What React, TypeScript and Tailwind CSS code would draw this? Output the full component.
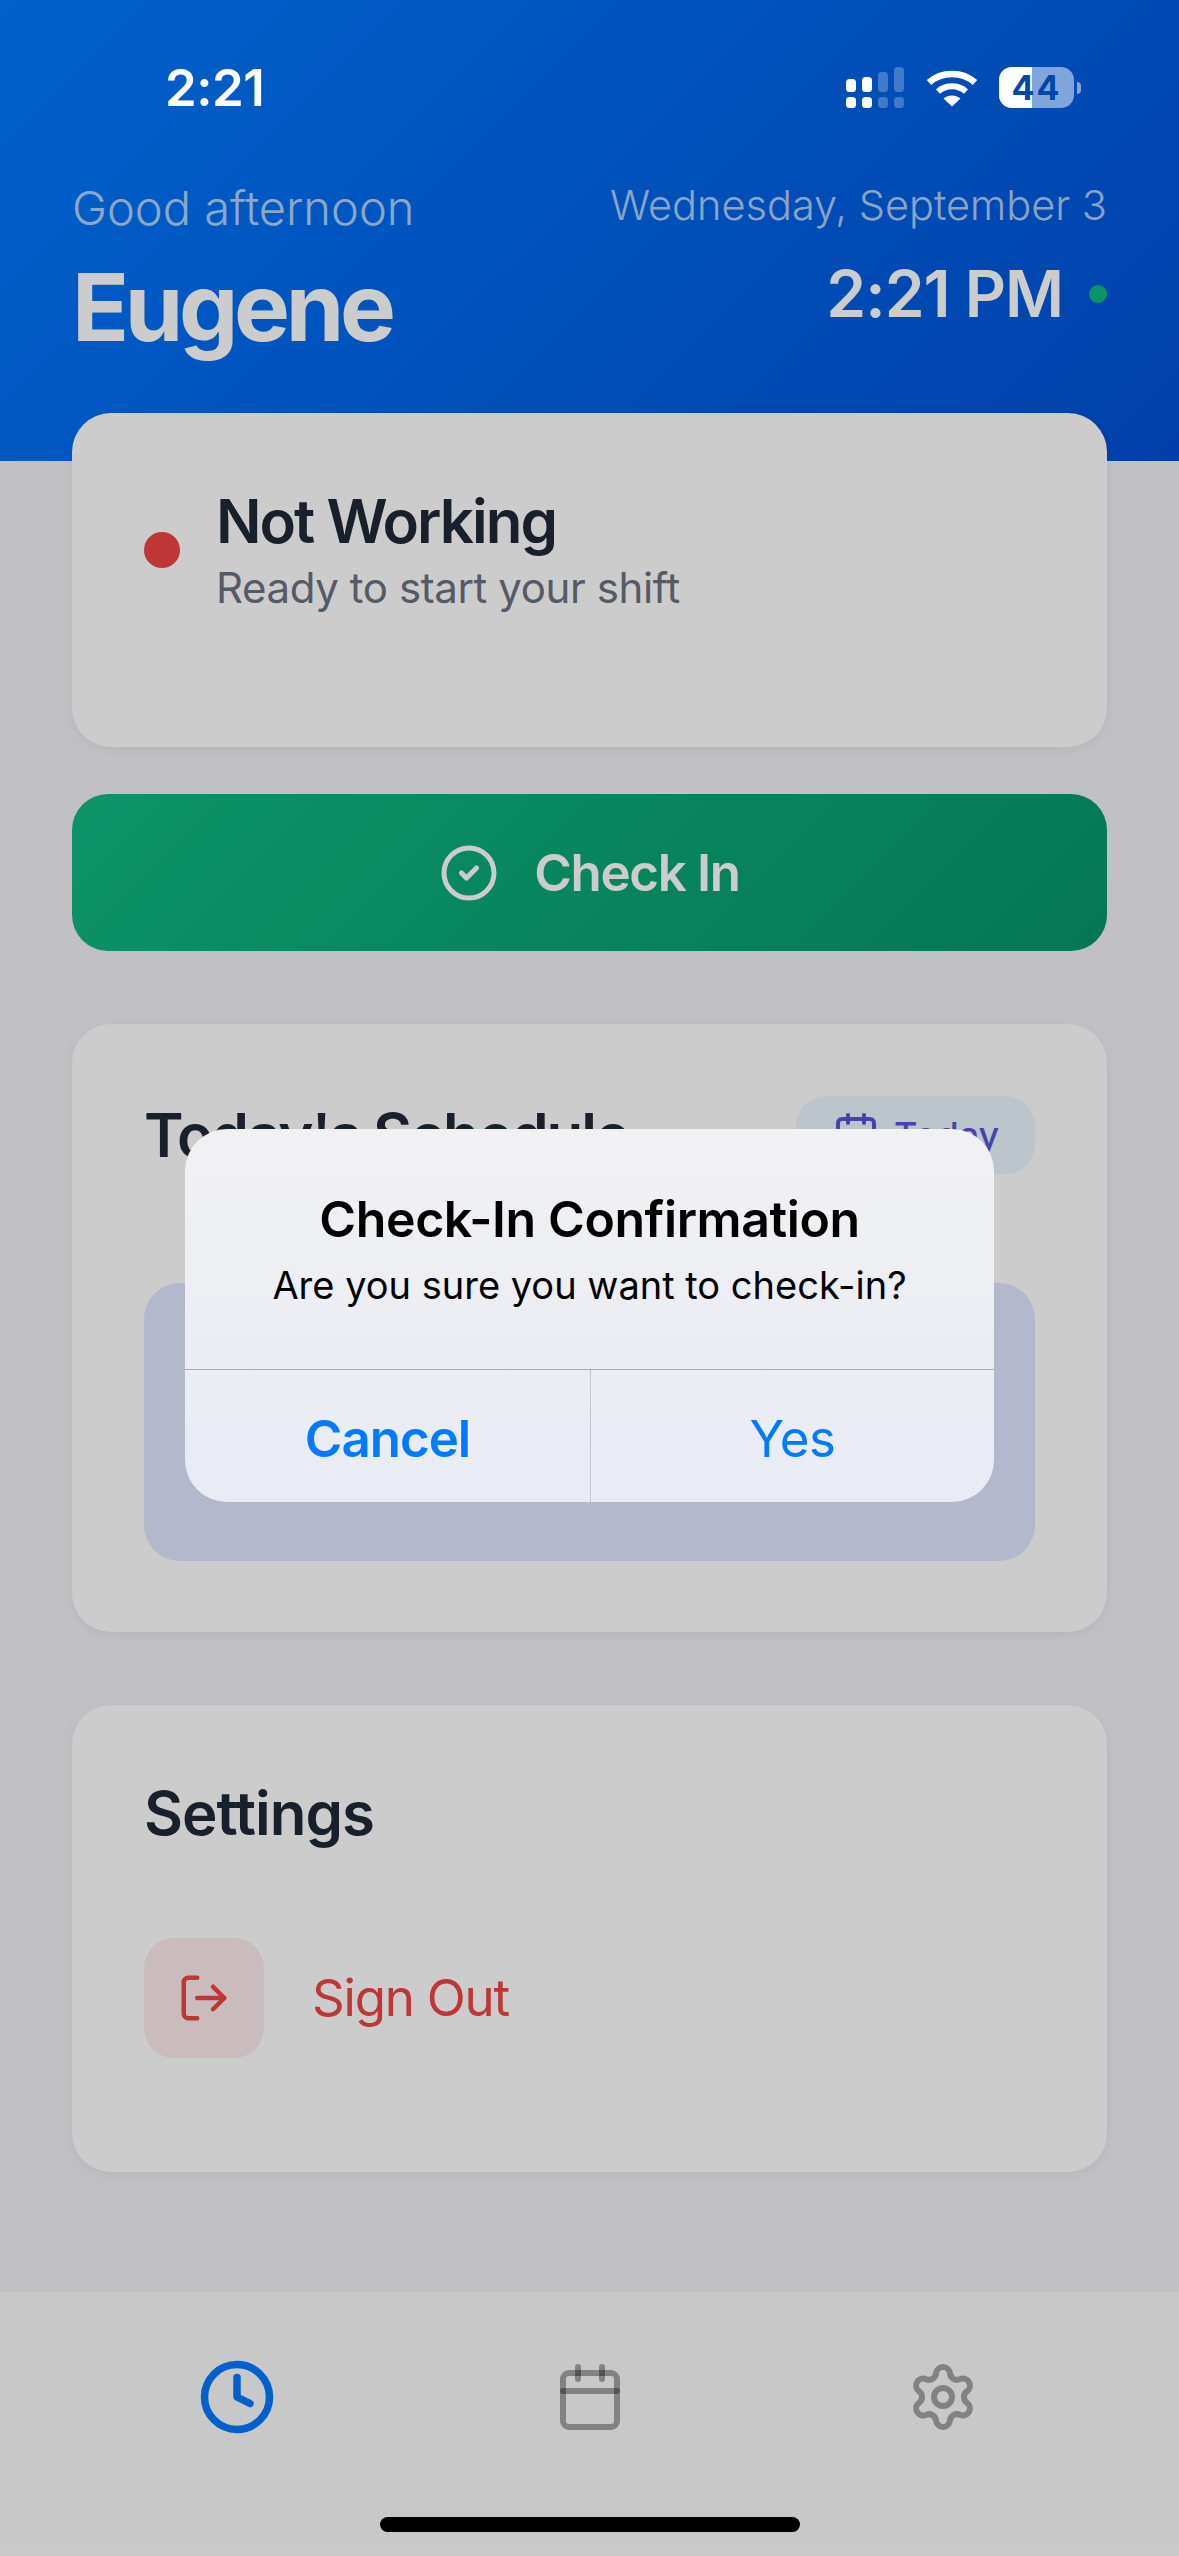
import { Calendar, CircleCheck, Clock, LogOut, Settings } from "lucide-react";

function StatusBar() {
  return (
    <div className="absolute top-0 left-0 right-0 z-30 h-[130px] text-white">
      <span className="absolute left-[165px] top-[57px] text-[51px] leading-[62px] font-semibold tracking-[-0.5px]">2:21</span>
      <div className="absolute left-[846px] top-[67px] flex items-start gap-[25px]">
        <svg width="58" height="41" viewBox="0 0 58 41" fill="white">
          <rect x="0" y="12" width="10" height="13" rx="3.5" />
          <rect x="16" y="10" width="10" height="15" rx="3.5" />
          <rect x="32" y="5" width="10" height="20" rx="3.5" opacity="0.25" />
          <rect x="48" y="0" width="10" height="25" rx="3.5" opacity="0.25" />
          <rect x="0" y="30" width="10" height="11" rx="3.5" />
          <rect x="16" y="30" width="10" height="11" rx="3.5" />
          <rect x="32" y="30" width="10" height="11" rx="3.5" opacity="0.25" />
          <rect x="48" y="30" width="10" height="11" rx="3.5" opacity="0.25" />
        </svg>
        <svg width="52" height="40" viewBox="0 0 52 40" className="mt-[1px] -ml-[3px]" fill="none" stroke="white">
          <path d="M3 14.5C15.5 3 36.500 3 49 14.5" strokeWidth="6.500" />
          <path d="M12 23.500C20 16.500 32 16.500 40 23.500" strokeWidth="6" />
          <path d="M26 38.500L17.500 30.500C22.500 26.500 29.500 26.500 34.500 30.500Z" fill="white" stroke="none" />
        </svg>
        <div className="-ml-[4px] flex items-center gap-[3px]">
          <div className="relative flex h-[41px] w-[75px] items-center justify-center overflow-hidden rounded-[13px] bg-white/50">
            <div className="absolute left-0 top-0 bottom-0 w-[33px] bg-white" />
            <span className="relative text-[34px] leading-none font-bold tracking-[2px] text-[#0047a8]">44</span>
          </div>
          <div className="h-[12px] w-[4px] rounded-r-full bg-white/50" />
        </div>
      </div>
    </div>
  );
}

function Card({ className, children }: { className: string; children: React.ReactNode }) {
  return <div className={`mx-[72px] rounded-[39px] bg-white shadow-[0_3px_12px_rgba(0,0,0,0.06)] ${className}`}>{children}</div>;
}

export default function App() {
  return (
    <div className="relative flex h-[2556px] w-[1179px] flex-col overflow-hidden bg-[#f2f2f7] font-[Inter,sans-serif]">
      <StatusBar />

      <header className="h-[461px] shrink-0 bg-[linear-gradient(135deg,#007aff,#0051d5)] px-[72px] pt-[180px] text-white">
        <div className="flex justify-between">
          <div>
            <p className="text-[47px] leading-[56px] font-light text-white/70">Good afternoon</p>
            <p className="mt-[16px] text-[94px] leading-[110px] font-bold tracking-[-4.300px]">Eugene</p>
          </div>
          <div className="flex flex-col items-end">
            <p className="text-[41.5px] leading-[50px] font-light text-white/70">Wednesday, September 3</p>
            <div className="mt-[26px] flex items-center gap-[26px]">
              <span className="text-[64px] leading-[76px] font-semibold tracking-[-1px]">2:21 PM</span>
              <span className="h-[18px] w-[18px] rounded-full bg-[#10b981]" />
            </div>
          </div>
        </div>
      </header>

      <main className="-mt-[48px] flex-1">
        <Card className="h-[334px] px-[72px] pt-[72px]">
          <div className="flex items-center gap-[36px]">
            <span className="mt-[2px] h-[36px] w-[36px] rounded-full bg-[#ef4444]" />
            <div>
              <p className="text-[60px] leading-[72px] font-semibold text-[#1f2937] tracking-[-2px]">Not Working</p>
              <p className="mt-[6px] text-[42px] leading-[50px] text-[#6b7280] tracking-[-0.4px]">Ready to start your shift</p>
            </div>
          </div>
        </Card>

        <button className="mx-[72px] mt-[47px] flex h-[157px] w-[1035px] items-center justify-center gap-[35px] rounded-[36px] bg-[linear-gradient(135deg,#10b981,#059669)] pt-[1px] text-white">
          <CircleCheck size={60} strokeWidth={2} />
          <span className="text-[51px] font-semibold tracking-[-1.3px]">Check In</span>
        </button>

        <Card className="mt-[73px] h-[608px] p-[72px]">
          <div className="flex items-center justify-between">
            <h2 className="text-[60px] leading-[72px] font-semibold text-[#1f2937] tracking-[-2px]">Today's Schedule</h2>
            <div className="flex h-[78px] w-[239px] items-center gap-[14px] rounded-[30px] bg-[#ebf5ff] px-[36px] text-[#5856d6]">
              <Calendar size={48} strokeWidth={2} className="shrink-0" />
              <span className="text-[36px] font-medium">Today</span>
            </div>
          </div>
          <div className="mt-[109px] h-[278px] rounded-[36px] bg-[#e0e7ff]" />
        </Card>

        <Card className="mt-[73px] h-[467px] px-[72px] pt-[72px]">
          <h2 className="text-[60px] leading-[72px] font-semibold text-[#1f2937] tracking-[-1px]">Settings</h2>
          <div className="mt-[89px] flex items-center gap-[48px]">
            <div className="flex h-[120px] w-[120px] items-center justify-center rounded-[30px] bg-[#ef4444]/10 text-[#ef4444]">
              <LogOut size={54} strokeWidth={2} />
            </div>
            <span className="text-[51px] text-[#ef4444] tracking-[-1.2px]">Sign Out</span>
          </div>
        </Card>
      </main>

      <nav className="grid h-[264px] shrink-0 grid-cols-3 bg-[#fbfbfb] px-[60px] pt-[66px]">
        <div className="flex h-[78px] items-center justify-center text-[#007aff]"><Clock size={78} strokeWidth={2.3} /></div>
        <div className="flex h-[78px] items-center justify-center text-black/35"><Calendar size={72} strokeWidth={2} /></div>
        <div className="flex h-[78px] items-center justify-center text-black/35"><Settings size={72} strokeWidth={2} /></div>
      </nav>

      {/* dimmed backdrop behind the alert */}
      <div className="absolute inset-0 z-20 bg-black/20" />

      <div className="absolute left-[380px] top-[2517px] z-30 h-[15px] w-[420px] rounded-full bg-black" />

      <div className="absolute left-[185px] top-[1129px] z-30 flex h-[373px] w-[809px] flex-col overflow-hidden rounded-[42px] bg-gradient-to-b from-[#f1f1f2] to-[#e9ebf5]">
        <div className="flex h-[240px] flex-col items-center pt-[60px] text-black">
          <p className="text-[50px] leading-[60px] font-semibold tracking-[-0.4px]">Check-In Confirmation</p>
          <p className="mt-[11px] text-[38px] leading-[50px]">Are you sure you want to check-in?</p>
        </div>
        <div className="grid flex-1 grid-cols-[406px_1fr] border-t-[1.5px] border-[#a9a9bb] text-[51px] text-[#007aff]">
          <button className="border-r border-[#c4c4d4] pt-[6px] font-semibold tracking-[-1px]">Cancel</button>
          <button className="pt-[6px] tracking-[-0.5px]">Yes</button>
        </div>
      </div>
    </div>
  );
}
